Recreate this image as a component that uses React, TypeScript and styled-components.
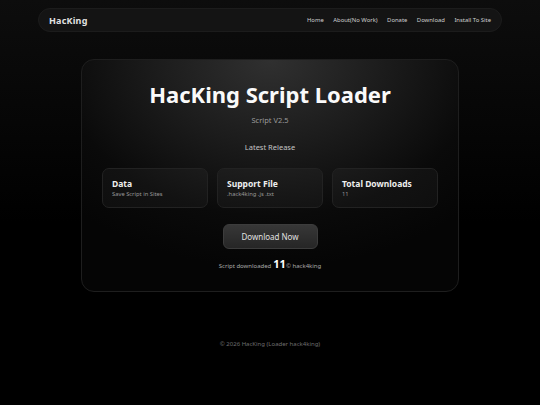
import React from "react";
import styled, { createGlobalStyle } from "styled-components";

const Global = createGlobalStyle`
  html, body { margin: 0; padding: 0; background: #000; }
  body {
    font-family: "Noto Sans", "Open Sans", sans-serif;
    color: #eee;
    min-height: 405px;
    background: linear-gradient(180deg, #0d0d0d 0%, #060606 30%, #000 55%);
  }
`;

const Page = styled.div`
  display: flex;
  flex-direction: column;
  align-items: center;
  padding-top: 8px;
  min-height: 405px;
  box-sizing: border-box;
`;

const Nav = styled.nav`
  width: 464px;
  height: 24px;
  box-sizing: border-box;
  display: flex;
  align-items: center;
  justify-content: space-between;
  padding: 0 10px;
  border-radius: 12px;
  background: #141414;
  border: 1px solid #1c1c1c;
`;

const Brand = styled.div`
  font-size: 9px;
  font-weight: 700;
  color: #e2e2e2;
  letter-spacing: 0.2px;
`;

const Links = styled.div`
  display: flex;
  gap: 9.5px;
`;

const NavLink = styled.a`
  font-size: 5.9px;
  color: #cfcfcf;
  text-decoration: none;
`;

const Card = styled.main`
  margin-top: 27px;
  width: 378px;
  height: 233px;
  box-sizing: border-box;
  border-radius: 13px;
  border: 1px solid #1e1e1e;
  background: radial-gradient(ellipse 75% 90% at 50% 0%, #303030 0%, #1c1c1c 40%, #0a0a0a 75%, #050505 100%);
  padding: 18px 20px 0;
  display: flex;
  flex-direction: column;
  align-items: center;
`;

const Title = styled.h1`
  margin: 0;
  font-size: 22px;
  line-height: 33px;
  font-weight: 700;
  color: #fafafa;
`;

const Sub = styled.div<{ $mt: number; $color: string }>`
  margin-top: ${(p) => p.$mt}px;
  font-size: 7.5px;
  line-height: 10px;
  color: ${(p) => p.$color};
`;

const Grid = styled.div`
  margin-top: 16px;
  width: 100%;
  display: grid;
  grid-template-columns: repeat(3, 1fr);
  gap: 9px;
`;

const Box = styled.div`
  height: 40px;
  box-sizing: border-box;
  border-radius: 7px;
  border: 1px solid #222;
  background: rgba(255, 255, 255, 0.035);
  padding: 9px 9px 0;
`;

const BoxTitle = styled.div`
  font-size: 8.5px;
  line-height: 11px;
  font-weight: 700;
  color: #eee;
`;

const BoxText = styled.div`
  margin-top: 1px;
  font-size: 5.8px;
  line-height: 8px;
  color: #999;
`;

const Button = styled.button`
  margin-top: 16px;
  width: 95px;
  height: 25px;
  border-radius: 6px;
  border: 1px solid #3c3c3c;
  background: linear-gradient(180deg, #373737 0%, #262626 100%);
  color: #e0e0e0;
  font-family: inherit;
  font-size: 8px;
  cursor: pointer;
`;

const Downloaded = styled.div`
  margin-top: 7px;
  font-size: 6px;
  color: #aaa;
  display: flex;
  align-items: baseline;
`;

const Count = styled.span`
  font-size: 11px;
  font-weight: 700;
  color: #fff;
  margin: 0 0 0 2px;
`;

const Footer = styled.footer`
  margin-top: 48px;
  font-size: 6px;
  color: #6f6f6f;
`;

export default function App() {
  return (
    <>
      <Global />
      <Page>
        <Nav>
          <Brand>HacKing</Brand>
          <Links>
            <NavLink>Home</NavLink>
            <NavLink>About(No Work)</NavLink>
            <NavLink>Donate</NavLink>
            <NavLink>Download</NavLink>
            <NavLink>Install To Site</NavLink>
          </Links>
        </Nav>
        <Card>
          <Title>HacKing Script Loader</Title>
          <Sub $mt={4} $color="#9a9a9a">Script V2.5</Sub>
          <Sub $mt={17} $color="#c4c4c4">Latest Release</Sub>
          <Grid>
            <Box>
              <BoxTitle>Data</BoxTitle>
              <BoxText>Save Script in Sites</BoxText>
            </Box>
            <Box>
              <BoxTitle>Support File</BoxTitle>
              <BoxText>.hack4king .js .txt</BoxText>
            </Box>
            <Box>
              <BoxTitle>Total Downloads</BoxTitle>
              <BoxText>11</BoxText>
            </Box>
          </Grid>
          <Button>Download Now</Button>
          <Downloaded>
            Script downloaded <Count>11</Count>© hack4king
          </Downloaded>
        </Card>
        <Footer>© 2026 HacKing (Loader hack4king)</Footer>
      </Page>
    </>
  );
}
